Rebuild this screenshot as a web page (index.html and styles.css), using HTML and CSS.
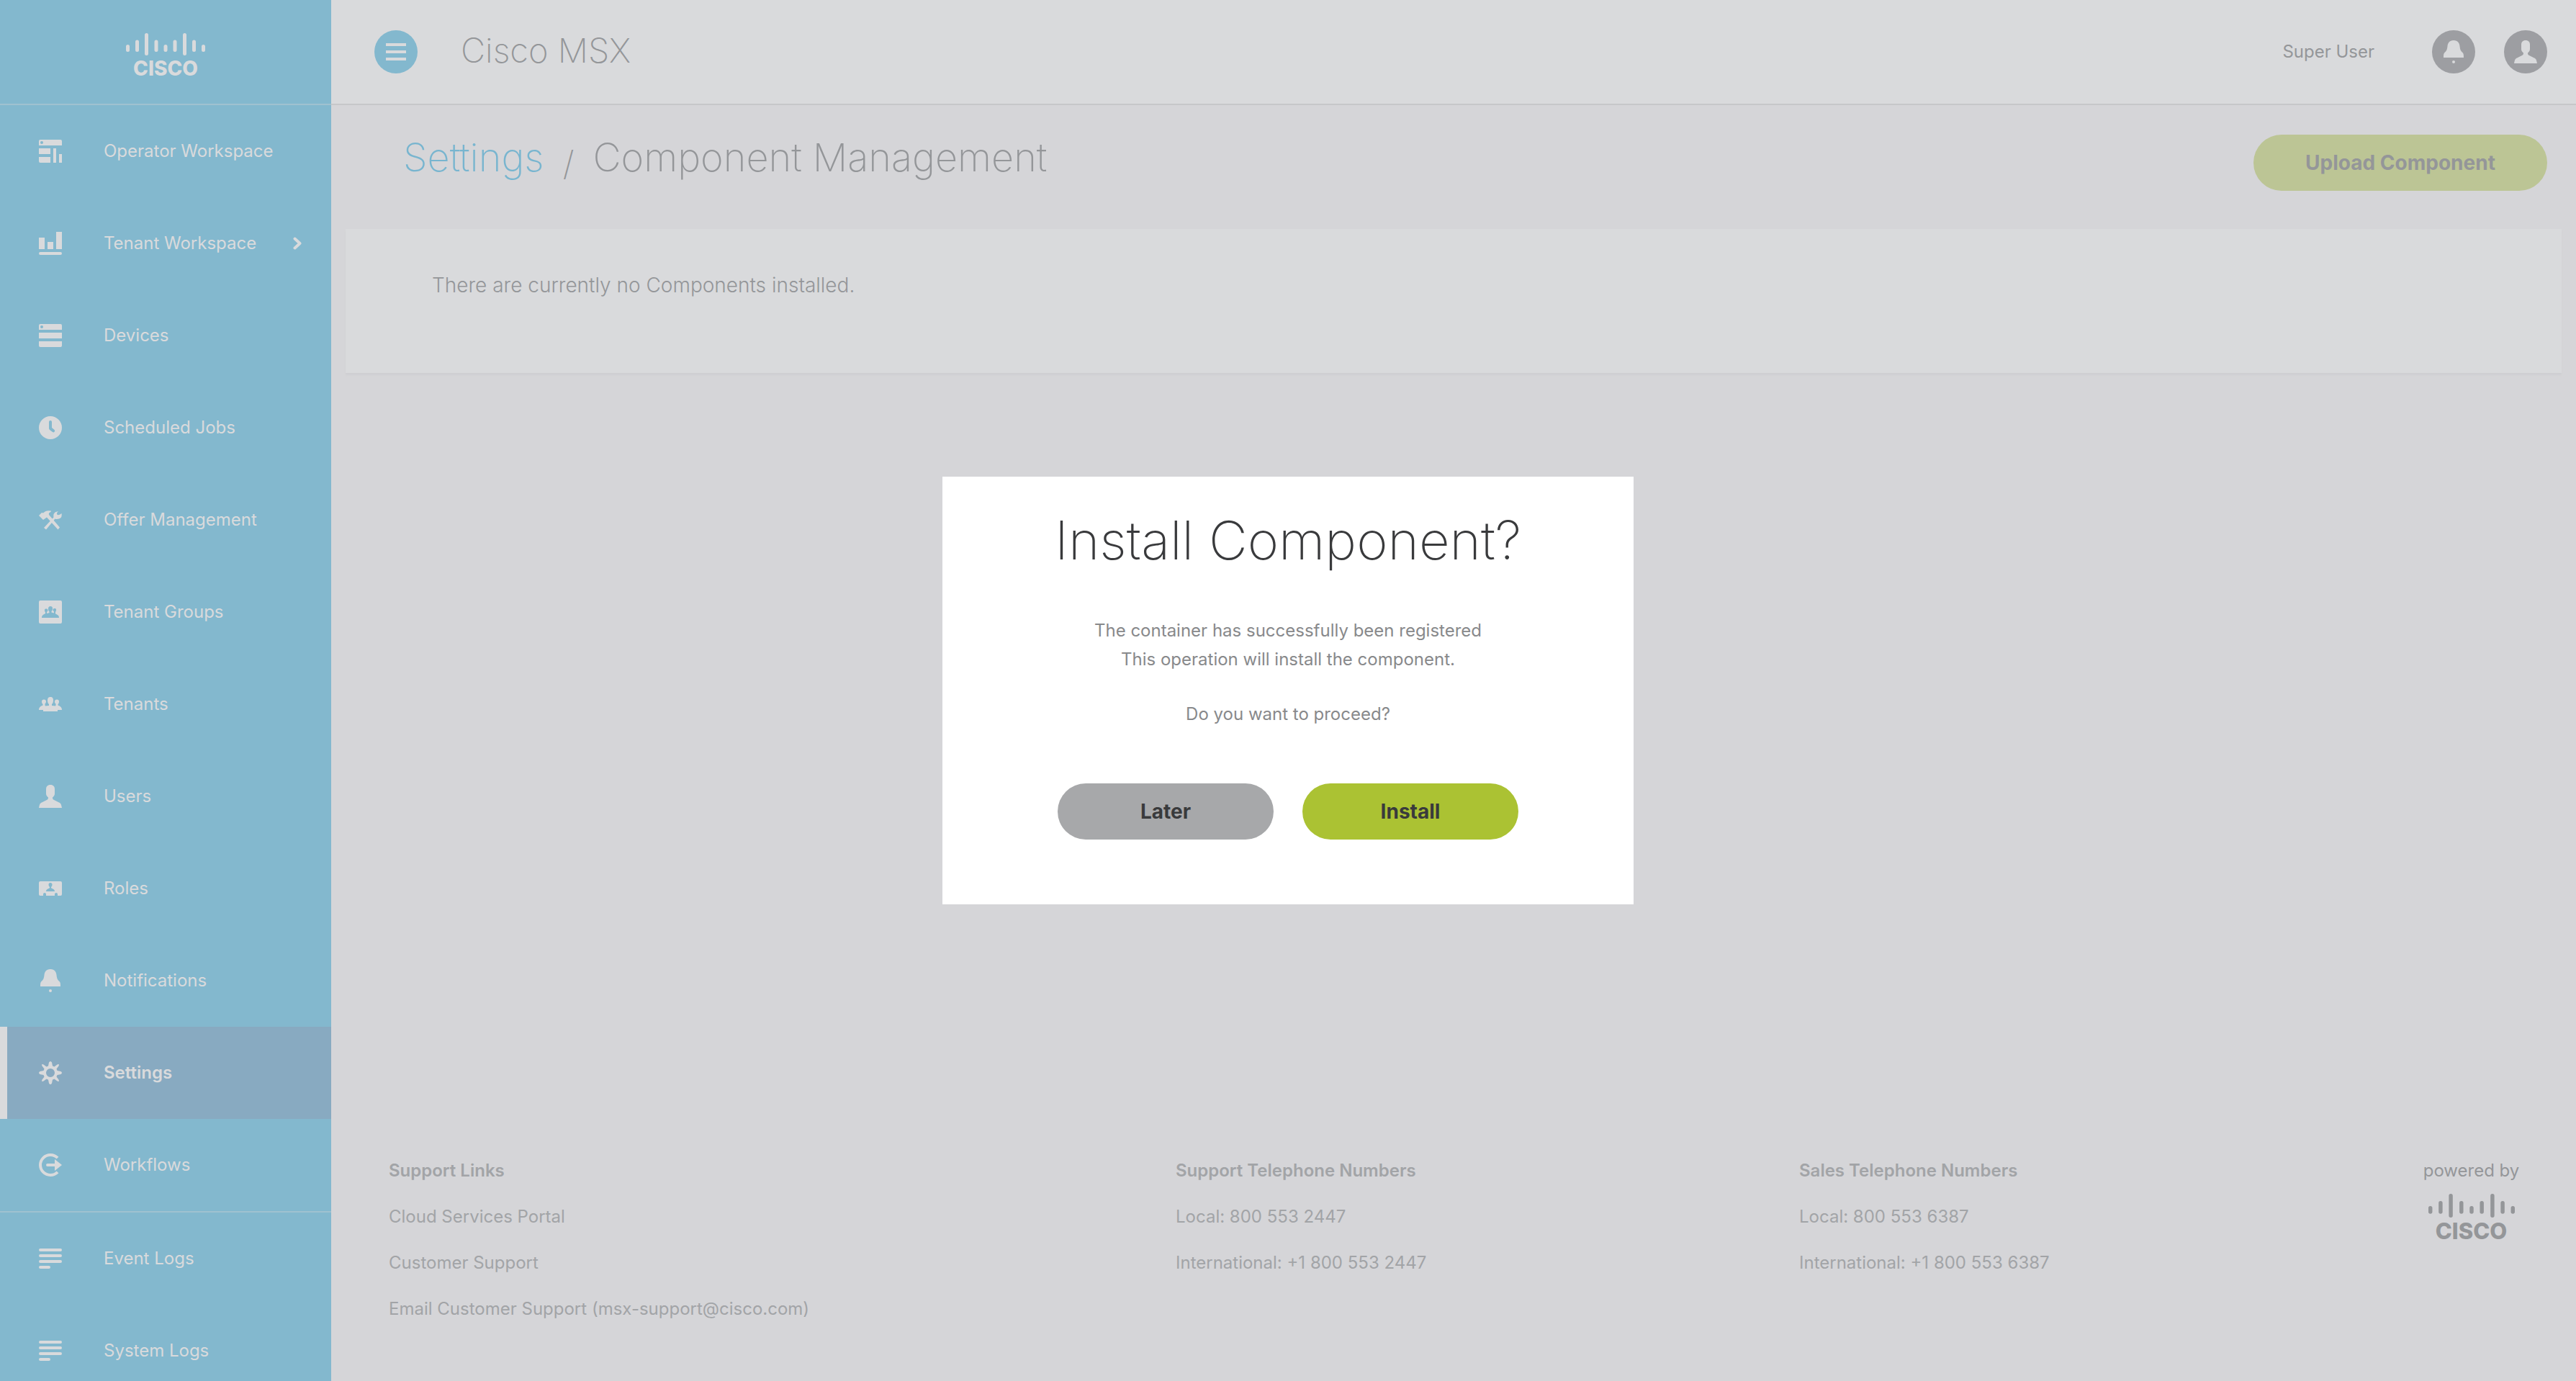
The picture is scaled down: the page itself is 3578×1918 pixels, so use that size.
FILE: index.html
```html
<!DOCTYPE html>
<html lang="en">
<head>
<meta charset="utf-8">
<title>Cisco MSX - Component Management</title>
<meta name="viewport" content="width=device-width, initial-scale=1">
<link rel="stylesheet" href="styles.css">
</head>
<body>
<svg class="sprite" aria-hidden="true">
  <symbol id="i-operator" viewBox="0 0 32 32"><path fill-rule="evenodd" d="M2 0h28a2 2 0 0 1 2 2v6H0V2a2 2 0 0 1 2-2zm2 2a2 2 0 1 0 0 4 2 2 0 0 0 0-4zM0 12h16v8H0zM0 24h16v8H2a2 2 0 0 1-2-2zM20 12h4v20h-4zM28 20h4v12h-4z"/></symbol>
  <symbol id="i-chart" viewBox="0 0 32 32"><path d="M0 8h8v16H0zM12 14h8v10h-8zM24 0h8v24h-8z"/><rect y="28" width="32" height="4" rx="2"/></symbol>
  <symbol id="i-devices" viewBox="0 0 32 32"><path fill-rule="evenodd" d="M2 0h28a2 2 0 0 1 2 2v6H0V2a2 2 0 0 1 2-2zm2 2a2 2 0 1 0 0 4 2 2 0 0 0 0-4zM0 12h32v8H0zM0 24h32v6a2 2 0 0 1-2 2H2a2 2 0 0 1-2-2z"/></symbol>
  <symbol id="i-clock" viewBox="0 0 32 32"><path fill-rule="evenodd" d="M16 0a16 16 0 1 1 0 32 16 16 0 0 1 0-32zm-2 8v9q0 1 1 2l4 3a2 2 0 0 0 2.600-3L18 16V8a2 2 0 0 0-4 0z"/></symbol>
  <symbol id="i-tools" viewBox="0 0 32 32"><path d="M0 10l4-4 2 .5Q10 2 17 3.500l-.5 1.500q-3.500 1-2.500 4L29 26.500 26.500 29.500 11 12.500 6 16z"/><path d="M29 4q-4 0-4 4 1.500 3 6.500-1 1.500 8-6.500 8-1.500 0-2.500-.5L10 29.500 7 27 20.500 12.500Q19 4 29 4z"/></symbol>
  <symbol id="i-person" viewBox="0 0 32 32"><path d="M16 0c4 0 6 2.500 6 6v6c0 3-1.500 4-3 5.500 0 2 .5 3 2 3.500l7 3.500c3 1.500 3 3 4 7.500H0c1-4.500 1-6 4-7.500l7-3.500c1.500-.5 2-1.500 2-3.500-1.500-1.500-3-2.500-3-5.500V6c0-3.500 2-6 6-6z"/></symbol>
  <symbol id="i-people" viewBox="0 0 32 32"><path d="M16 6c3 0 4 2 4 4.500S19.500 15 18 16v2l5 .5.500-1V15.500C22 14.500 22 13 22 12.500 22 10.500 23 9.500 25 9.500s3 1 3 3c0 1.500-.5 2.500-1.500 3.500v1.500c2 1 5.500 2 5.500 6.500h-6v2H6v-2H0c0-4.500 3.500-5.500 5.500-6.500V16C4.500 15 4 14 4 12.500c0-2 1-3 3-3s3 1 3 3c0 1-.5 2-1.500 3v2l.5 1 5-.5v-2c-1.500-1-2-3-2-5.500S13 6 16 6z"/></symbol>
  <symbol id="i-groups" viewBox="0 0 32 32"><path fill-rule="evenodd" d="M2 0h28a2 2 0 0 1 2 2v28a2 2 0 0 1-2 2H2a2 2 0 0 1-2-2V2a2 2 0 0 1 2-2zM16 8c-2 0-3 1.500-3 3.500s.5 3 1.500 4v1.500l-3 1-.5-1v-1c1-1 1.500-1.500 1.500-2.500 0-1.500-1-2-2.500-2s-2 .5-2 2 .5 2 1 3v1.500C7 19.500 4 20 4 24h24c0-4-3-4.500-5-5.500V16c.5-1 1-1.500 1-3s-.5-2-2-2-2.500.5-2.500 2c0 1 .5 1.500 1.500 2.500v1l-.5 1-3-1v-1.500c1-1 1.500-2 1.500-4S18 8 16 8z"/></symbol>
  <symbol id="i-roles" viewBox="0 0 32 32"><path fill-rule="evenodd" d="M2 6h28a2 2 0 0 1 2 2v16a2 2 0 0 1-2 2h-4v-2q0-2-2-2t-2 2v2H10v-2q0-2-2-2t-2 2v2H2a2 2 0 0 1-2-2V8a2 2 0 0 1 2-2zm14 2c-1.500 0-2.500 1-2.500 2.500s.5 2.500 1.500 3.500v1c-1 1.500-5 1.500-5 5h12c0-3.500-4-3.500-5-5v-1c1-1 1.500-2 1.500-3.500S17.500 8 16 8z"/></symbol>
  <symbol id="i-bell" viewBox="0 0 32 32"><path d="M16 0c6 0 8 4 8.500 8 .5 5 1.500 7 4 9 1.500 1.500 1.500 3.500 1.500 7H2c0-3.500 0-5.500 1.500-7 2.500-2 3.500-4 4-9C8 4 10 0 16 0z"/><circle cx="16" cy="30" r="2"/></symbol>
  <symbol id="i-gear" viewBox="0 0 32 32"><path fill-rule="evenodd" d="M14 1.500Q16-1.500 18 1.500L19 6.500 21.500 7.500 25.500 4.500Q29 3 27.500 6.500L24.500 10.500 25.500 13 30.500 14Q33.500 16 30.500 18L25.500 19 24.500 21.500 27.500 25.500Q29 29 25.500 27.500L21.500 24.500 19 25.500 18 30.500Q16 33.500 14 30.500L13 25.500 10.500 24.500 6.500 27.500Q3 29 4.500 25.500L7.500 21.500 6.500 19 1.500 18Q-1.500 16 1.500 14L6.500 13 7.500 10.500 4.500 6.500Q3 3 6.500 4.500L10.500 7.500 13 6.500zM16 10a6 6 0 1 0 0 12 6 6 0 0 0 0-12z"/></symbol>
  <symbol id="i-flow" viewBox="0 0 32 32"><path d="M26 6.200A14 14 0 1 0 26 25.800" fill="none" stroke="currentColor" stroke-width="4"/><path d="M12 14h10V8l10 8-10 8v-6H12a2 2 0 0 1 0-4z"/></symbol>
  <symbol id="i-logs" viewBox="0 0 32 32"><rect y="2" width="32" height="4" rx="2"/><rect y="10" width="32" height="4" rx="2"/><rect y="18" width="32" height="4" rx="2"/><rect y="26" width="16" height="4" rx="2"/></symbol>
  <symbol id="i-cisco-bars" viewBox="0 0 110 31" preserveAspectRatio="none"><path d="M2.500 18.500v5M15.500 12v11.500M28.500 2.500v26M42 12v11.500M55 18.500v5M68 12v11.500M81.500 2.500v26M94.500 12v11.500M107.500 18.500v5" fill="none" stroke="currentColor" stroke-width="5" stroke-linecap="round"/></symbol>
</svg>

<div class="shell">
  <aside class="sidebar">
    <a class="brand" href="#" aria-label="Cisco home">
      <svg class="brand-bars"><use href="#i-cisco-bars"/></svg>
      <span class="brand-word">CISCO</span>
    </a>
    <nav class="nav" aria-label="Main">
      <a class="nav-item" href="#"><svg class="icon"><use href="#i-operator"/></svg><span>Operator Workspace</span></a>
      <a class="nav-item" href="#"><svg class="icon"><use href="#i-chart"/></svg><span>Tenant Workspace</span><svg class="chevron" viewBox="0 0 12 18"><path d="M2.500 2.500l7 6.500-7 6.500"/></svg></a>
      <a class="nav-item" href="#"><svg class="icon"><use href="#i-devices"/></svg><span>Devices</span></a>
      <a class="nav-item" href="#"><svg class="icon"><use href="#i-clock"/></svg><span>Scheduled Jobs</span></a>
      <a class="nav-item" href="#"><svg class="icon"><use href="#i-tools"/></svg><span>Offer Management</span></a>
      <a class="nav-item" href="#"><svg class="icon"><use href="#i-groups"/></svg><span>Tenant Groups</span></a>
      <a class="nav-item" href="#"><svg class="icon"><use href="#i-people"/></svg><span>Tenants</span></a>
      <a class="nav-item" href="#"><svg class="icon"><use href="#i-person"/></svg><span>Users</span></a>
      <a class="nav-item" href="#"><svg class="icon"><use href="#i-roles"/></svg><span>Roles</span></a>
      <a class="nav-item" href="#"><svg class="icon"><use href="#i-bell"/></svg><span>Notifications</span></a>
      <a class="nav-item nav-item-active" href="#" aria-current="page"><svg class="icon"><use href="#i-gear"/></svg><span>Settings</span></a>
      <a class="nav-item" href="#"><svg class="icon"><use href="#i-flow"/></svg><span>Workflows</span></a>
      <hr class="nav-rule">
      <a class="nav-item" href="#"><svg class="icon"><use href="#i-logs"/></svg><span>Event Logs</span></a>
      <a class="nav-item" href="#"><svg class="icon"><use href="#i-logs"/></svg><span>System Logs</span></a>
    </nav>
  </aside>

  <div class="content">
    <header class="topbar">
      <button class="round menu-toggle" type="button" aria-label="Toggle menu"><svg class="menu-lines" viewBox="0 0 28 24"><path d="M0 0h28v4H0zM0 10h28v4H0zM0 20h28v4H0z"/></svg></button>
      <div class="product">Cisco MSX</div>
      <div class="user-name">Super User</div>
      <button class="round" type="button" aria-label="Notifications"><svg class="icon"><use href="#i-bell"/></svg></button>
      <button class="round" type="button" aria-label="Account"><svg class="icon"><use href="#i-person"/></svg></button>
    </header>

    <main class="page">
      <div class="page-head">
        <h1 class="crumbs"><a href="#">Settings</a><span class="slash">/</span><span>Component Management</span></h1>
        <button class="btn btn-upload" type="button">Upload Component</button>
      </div>
      <section class="card">
        <p>There are currently no Components installed.</p>
      </section>
    </main>

    <footer class="footer">
      <div class="footer-col">
        <h2>Support Links</h2>
        <a href="#">Cloud Services Portal</a>
        <a href="#">Customer Support</a>
        <a href="#">Email Customer Support (msx-support@cisco.com)</a>
      </div>
      <div class="footer-col">
        <h2>Support Telephone Numbers</h2>
        <p>Local: 800 553 2447</p>
        <p>International: +1 800 553 2447</p>
      </div>
      <div class="footer-col">
        <h2>Sales Telephone Numbers</h2>
        <p>Local: 800 553 6387</p>
        <p>International: +1 800 553 6387</p>
      </div>
      <div class="powered">
        <p>powered by</p>
        <svg class="powered-bars"><use href="#i-cisco-bars"/></svg>
        <span class="powered-word">CISCO</span>
      </div>
    </footer>
  </div>
</div>

<div class="overlay">
  <section class="modal" role="dialog" aria-modal="true" aria-labelledby="modal-title">
    <h2 id="modal-title">Install Component?</h2>
    <p>The container has successfully been registered<br>This operation will install the component.</p>
    <p class="question">Do you want to proceed?</p>
    <div class="modal-actions">
      <button class="btn btn-later" type="button">Later</button>
      <button class="btn btn-install" type="button">Install</button>
    </div>
  </section>
</div>
</body>
</html>
```
FILE: styles.css
```css
:root {
  --blue: #83b8ce;
  --blue-active: #88aac1;
  --light: #d9dadc;
  --page: #d5d5d8;
  --text: #949699;
  --text-soft: #a2a4a7;
}

* { box-sizing: border-box; }

body, h1, h2, p { margin: 0; }

body {
  font-family: Inter, "Liberation Sans", sans-serif;
  font-size: 24px;
  line-height: 32px;
  color: var(--text);
  background: var(--page);
}

a { color: inherit; text-decoration: none; }

button { font: inherit; border: 0; padding: 0; cursor: pointer; }

.sprite { display: none; }

.icon {
  display: block;
  flex: none;
  width: 32px;
  height: 32px;
  fill: currentColor;
}

.shell {
  display: flex;
  height: 100vh;
  overflow: hidden;
}

/* Sidebar */
.sidebar {
  flex: none;
  width: 460px;
  color: var(--light);
  background: var(--blue);
}

.brand {
  display: flex;
  flex-direction: column;
  align-items: center;
  height: 146px;
  padding-top: 46px;
  border-bottom: 2px solid #9fc1d0;
}

.brand-bars { width: 110px; height: 31px; }

.brand-word {
  font-size: 28px;
  font-weight: 800;
  line-height: 36px;
}

.nav-item {
  display: flex;
  align-items: center;
  height: 128px;
  padding: 0 41px 0 54px;
  white-space: nowrap;
}

.nav-item .icon { margin-right: 58px; }

.nav-item-active {
  padding-left: 44px;
  border-left: 10px solid var(--light);
  background: var(--blue-active);
  font-weight: 600;
}

.nav-rule { height: 2px; margin: 0; border: 0; background: #9fc1d0; }

.chevron {
  flex: none;
  width: 12px;
  height: 18px;
  margin-left: auto;
  fill: none;
  stroke: currentColor;
  stroke-width: 4;
  stroke-linecap: round;
  stroke-linejoin: round;
}

/* Main column */
.content {
  flex: 1;
  min-width: 0;
  display: flex;
  flex-direction: column;
}

.topbar {
  display: flex;
  align-items: center;
  gap: 40px;
  height: 146px;
  padding: 0 40px 0 60px;
  background: var(--light);
  border-bottom: 2px solid #c6c7c9;
}

.round {
  display: grid;
  place-items: center;
  width: 60px;
  height: 60px;
  border-radius: 50%;
  color: var(--light);
  background: #9d9ea2;
}

.menu-toggle { background: var(--blue); }

.menu-lines { width: 28px; height: 24px; fill: currentColor; }

.product {
  margin-left: 20px;
  padding-bottom: 4px;
  font-size: 47px;
  font-weight: 200;
  line-height: 64px;
}

.user-name { margin: 0 40px 0 auto; }

.page-head {
  display: flex;
  justify-content: space-between;
  align-items: flex-start;
  height: 172px;
  padding: 41px 40px 0 100px;
}

.crumbs {
  display: flex;
  gap: 26px;
  font-size: 54px;
  font-weight: 200;
  line-height: 64px;
}

.crumbs a { color: #78b5cf; }

.slash { padding-top: 8px; font-size: 47px; }

.btn {
  height: 78px;
  border-radius: 39px;
  font-size: 28px;
  font-weight: 700;
  color: #393a3c;
}

.btn-upload { width: 408px; color: var(--text); background: #bcc595; }

.card {
  min-height: 200px;
  margin: 0 20px;
  padding: 58px 120px;
  font-size: 28px;
  font-weight: 300;
  line-height: 40px;
  background: var(--light);
  box-shadow: 0 3px 2px #cfcfd2;
}

/* Footer */
.footer {
  display: grid;
  grid-template-columns: 1093fr 866fr 868fr 131px;
  margin-top: auto;
  padding: 0 80px 68px;
  line-height: 64px;
  color: var(--text-soft);
}

.footer-col a { display: block; width: fit-content; }

.footer h2 { font-size: 24px; font-weight: 600; }

.powered {
  display: flex;
  flex-direction: column;
  align-items: center;
  color: var(--text);
  white-space: nowrap;
}

.powered-bars { width: 120px; height: 33px; }

.powered-word {
  font-size: 31px;
  font-weight: 800;
  line-height: 38px;
}

/* Dialog */
.overlay {
  position: fixed;
  inset: 0;
  display: grid;
  place-items: center;
}

.modal {
  width: 960px;
  padding: 40px 80px 90px;
  line-height: 40px;
  text-align: center;
  color: #88898b;
  background: #fff;
}

.modal h2 {
  margin-bottom: 58px;
  font-size: 74px;
  font-weight: 200;
  line-height: 96px;
  color: #393a3c;
}

.question { margin-top: 36px; }

.modal-actions {
  display: flex;
  justify-content: center;
  gap: 40px;
  margin-top: 76px;
}

.modal-actions .btn { width: 300px; }

.btn-later { background: #a7a8aa; }

.btn-install { background: #abc233; }
```
